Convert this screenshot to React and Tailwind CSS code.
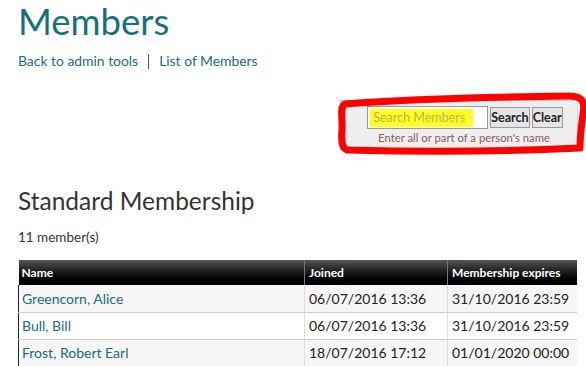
export default function App() {
  const rows = [
    ["Greencorn, Alice", "06/07/2016 13:36", "31/10/2016 23:59"],
    ["Bull, Bill", "06/07/2016 13:36", "31/10/2016 23:59"],
    ["Frost, Robert Earl", "18/07/2016 17:12", "01/01/2020 00:00"],
  ];
  return (
    <div className="w-[586px] h-[366px] overflow-hidden bg-white pl-[18px] pr-[10px] font-['Lato','Open_Sans',sans-serif]">
      <h1 className="text-[36.5px] leading-[37px] pt-[3px] text-[#17707e] font-normal">Members</h1>
      <div className="mt-[12px] flex items-center text-[13.9px] leading-[18px] text-[#1b6c7c]">
        <span>Back to admin tools</span>
        <span className="mx-[10px] h-[15px] w-px bg-[#555]"></span>
        <span>List of Members</span>
      </div>
      <div className="mt-[30px] flex justify-end">
        <div className="relative mr-[-2px] w-[238px] h-[50px] bg-[#eeeeee] border border-dotted border-[#bbb] flex flex-col items-center pt-[5px]">
          <div className="flex items-center gap-[2px] ml-[12px]">
            <div className="w-[121px] h-[23px] bg-white border border-[#999] flex items-center px-[2px]">
              <span className="bg-[#ffff22] text-[#b7b35a] text-[12.5px] leading-[18px] pl-[3px] w-[103px]">Search Members</span>
            </div>
            <button className="h-[21px] px-0 bg-[#e5e5e5] border border-[#999] text-[12.5px] font-bold text-[#222] leading-[18px]">Search</button>
            <button className="h-[21px] px-0 bg-[#e5e5e5] border border-[#999] text-[12.5px] font-bold text-[#222] leading-[18px]">Clear</button>
          </div>
          <div className="ml-[10px] mt-[2px] text-[11.3px] leading-[14px] text-[#8d5c5c]">Enter all or part of a person's name</div>
          <svg className="absolute left-[-4px] top-[-9px] pointer-events-none" width="252" height="66" viewBox="0 0 252 66">
            <path d="M8 12 C 60 8, 150 5, 232 4 C 246 4, 248 10, 246 22 C 244 36, 243 46, 243 56 C 180 59, 90 60, 10 58 C 5 56, 4 50, 5 38 C 6 26, 2 16, 8 12 Z" fill="none" stroke="#ff0000" strokeWidth="7" strokeLinejoin="round" />
          </svg>
        </div>
      </div>
      <h2 className="mt-[37px] text-[24.5px] leading-[28px] text-[#333] font-normal">Standard Membership</h2>
      <div className="mt-[14px] text-[13.5px] leading-[16px] text-[#333]">11 member(s)</div>
      <table className="mt-[15px] w-[558px] border-collapse text-left table-fixed">
        <colgroup>
          <col className="w-[286px]" />
          <col className="w-[143px]" />
          <col className="w-[129px]" />
        </colgroup>
        <thead>
          <tr className="h-[25px] bg-gradient-to-b from-[#555] via-[#1a1a1a] to-[#000] text-white text-[12px] font-bold">
            <th className="px-[3px] font-bold">Name</th>
            <th className="px-[4px] font-bold border-l border-[#777]">Joined</th>
            <th className="px-[4px] font-bold border-l border-[#777]">Membership expires</th>
          </tr>
        </thead>
        <tbody className="text-[14px]">
          {rows.map((r, i) => (
            <tr key={i} className={`h-[27px] ${i % 2 === 0 ? "bg-[#f6f6f6]" : "bg-white"}`}>
              <td className="px-[3px] text-[#1b6c7c] border-l border-l-[#222] border-b border-b-[#ccc]">{r[0]}</td>
              <td className="px-[4px] text-[#222] border-l border-l-[#ddd] border-b border-b-[#ccc]">{r[1]}</td>
              <td className="px-[4px] text-[#222] border-l border-l-[#ddd] border-b border-b-[#ccc]">{r[2]}</td>
            </tr>
          ))}
        </tbody>
      </table>
    </div>
  );
}
